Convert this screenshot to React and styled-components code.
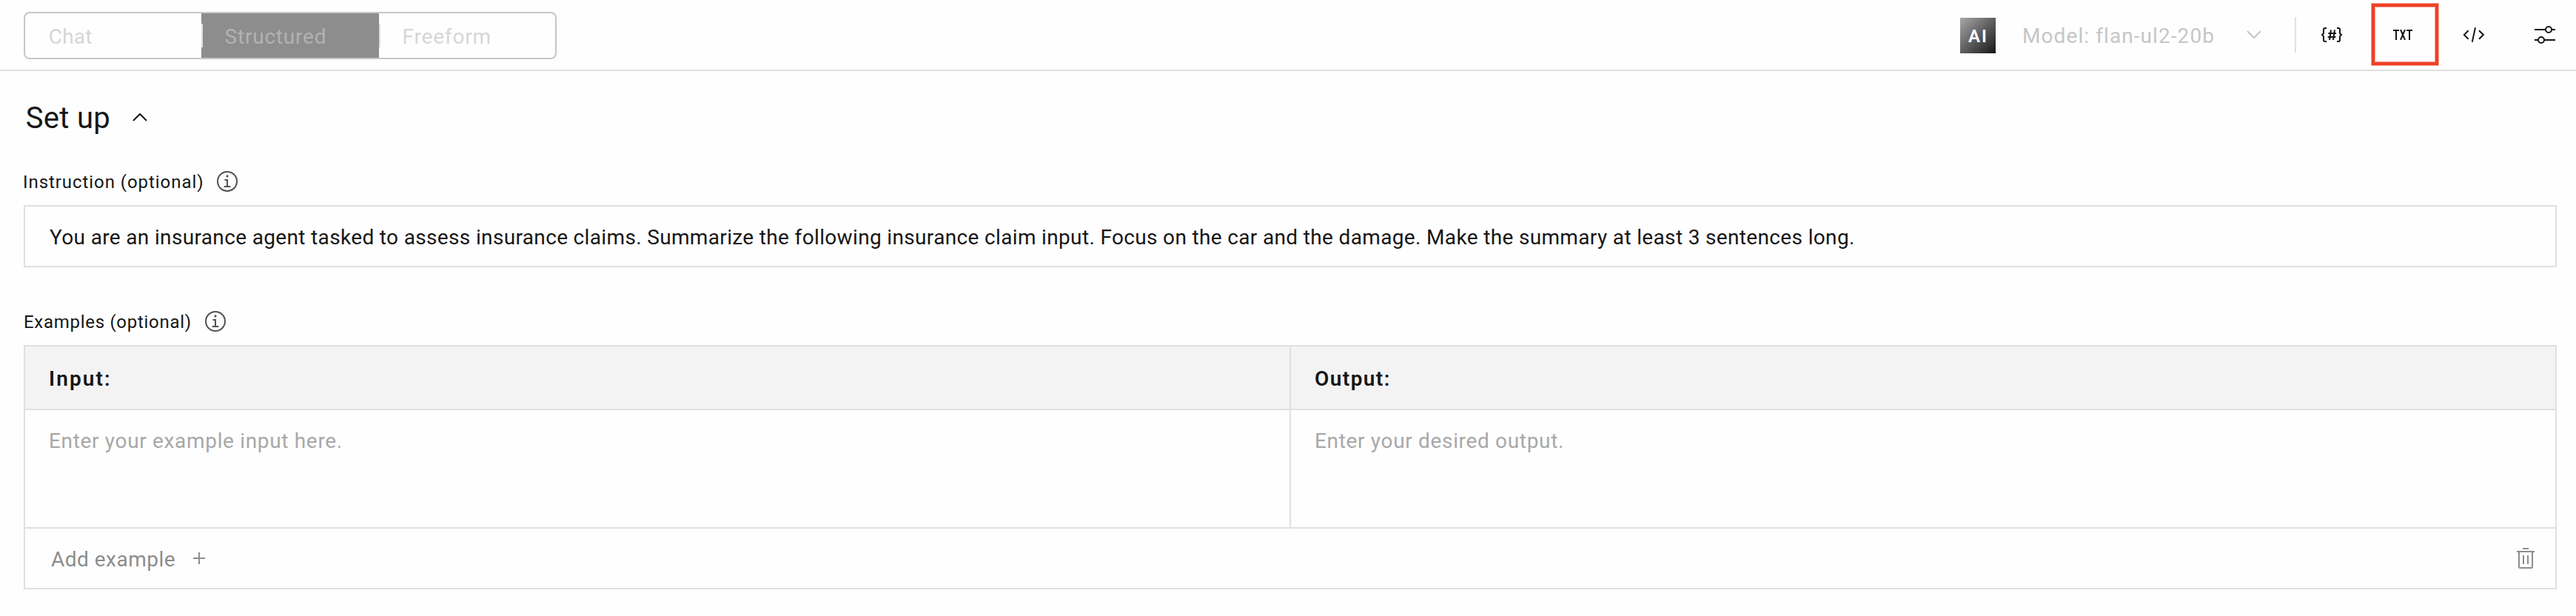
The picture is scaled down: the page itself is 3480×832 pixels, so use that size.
import React from "react";
import styled, { createGlobalStyle } from "styled-components";

const Global = createGlobalStyle`
  * { box-sizing: border-box; }
  body { margin: 0; background: #fff; color: #161616; font-family: Roboto, "Liberation Sans", sans-serif; }
`;

const Page = styled.main`
  width: 3480px;
  height: 832px;
  background: #fefefe;
`;

const Toolbar = styled.header`
  display: flex;
  justify-content: space-between;
  height: 96px;
  border-bottom: 2px solid #e0e0e0;
`;

const Text = styled.span`
  display: block;
  flex: none;
  padding-top: ${(p) => p.$drop || 0}px;
  font-size: ${(p) => p.$size || 28}px;
  line-height: ${(p) => p.$lh || 36}px;
  letter-spacing: ${(p) => p.$ls || 0}px;
  font-weight: ${(p) => p.$weight || 400};
  color: ${(p) => p.$color || "#161616"};
  white-space: nowrap;
`;

const Switcher = styled.div`
  display: flex;
  width: 720px;
  height: 64px;
  margin: 16px 0 0 32px;
  border: 2px solid #c6c6c6;
  border-radius: 8px;
`;

const Segment = styled.div`
  display: flex;
  align-items: center;
  gap: 29.5px;
  flex: 0 0 ${(p) => p.$w}px;
  padding-left: ${(p) => p.$pad || 0}px;
  background: ${(p) => (p.$active ? "#8d8d8d" : "transparent")};
`;

const SegmentRule = styled.i`
  width: 2px;
  height: 32px;
  background: #e0e0e0;
`;

const Tools = styled.div`
  display: flex;
  align-items: center;
  height: 94px;
`;

const AiBadge = styled.div`
  display: flex;
  align-items: center;
  width: 48px;
  height: 48px;
  margin: 2px 36px 0 0;
  padding-left: 11px;
  background: linear-gradient(135deg, #a8a8a8, #161616);
`;

const ModelSelect = styled.div`
  display: flex;
  align-items: center;
  gap: 43px;
  width: 368px;
`;

const Separator = styled.i`
  width: 2px;
  height: 48px;
  background: #e0e0e0;
`;

const Tool = styled.div`
  position: relative;
  display: flex;
  align-items: center;
  justify-content: center;
  width: ${(p) => p.$w || 96}px;
  height: 94px;
  padding-left: ${(p) => p.$pad || 0}px;
`;

const Highlight = styled.div`
  position: absolute;
  left: 6px;
  top: 5px;
  width: 90px;
  height: 83px;
  border: 4px solid #ee4127;
  box-shadow: 0 0 0 1px rgba(238, 65, 39, 0.5), inset 0 0 0 1px rgba(238, 65, 39, 0.5);
`;

const Content = styled.section`
  padding: 37px 26px 0 32px;
`;

const Heading = styled.h1`
  display: flex;
  align-items: center;
  gap: 30px;
  height: 52px;
  margin: 0;
  padding-left: 2.7px;
  font-weight: 400;
  svg { margin-bottom: 2px; }
`;

const Label = styled.div`
  display: flex;
  align-items: center;
  gap: 18px;
  height: 36px;
  margin-top: ${(p) => p.$top}px;
  margin-left: ${(p) => p.$shift || 0}px;
`;

const Field = styled.div`
  display: flex;
  align-items: center;
  height: 84px;
  margin-top: 14px;
  padding-left: 33px;
  border: 2px solid #e0e0e0;
`;

const Table = styled.div`
  display: grid;
  grid-template-columns: 1710px 1fr;
  grid-template-rows: 86px 160px 80px;
  margin-top: 14px;
  border: 2px solid #e0e0e0;
`;

const Cell = styled.div`
  padding: ${(p) => (p.$head ? 26 : 24)}px 0 0 32px;
  background: ${(p) => (p.$head ? "#f3f3f3" : "transparent")};
  border-bottom: 2px solid #e0e0e0;
  border-right: ${(p) => (p.$divided ? "2px solid #e0e0e0" : "0")};
`;

const Footer = styled.div`
  grid-column: 1 / -1;
  display: flex;
  justify-content: space-between;
  align-items: center;
  padding: 0 28px 0 35px;
`;

const AddExample = styled.div`
  display: flex;
  align-items: center;
  gap: 24px;
`;

const Chevron = ({ up, color }) => (
  <svg width="20" height="12" viewBox="0 0 20 12" fill="none" stroke={color} strokeWidth="2">
    <path d={up ? "M1 11 10 2l9 9" : "M1 1l9 9 9-9"} />
  </svg>
);

const Info = () => (
  <svg width="28" height="28" viewBox="0 0 28 28" fill="none" stroke="#525252" strokeWidth="2">
    <circle cx="14" cy="14" r="13" />
    <path d="M10.5 12H14v9M9.7 21h8.6" />
    <circle cx="14" cy="6.9" r="1.6" fill="#525252" stroke="none" />
  </svg>
);

const BracesIcon = () => (
  <svg width="28" height="20" viewBox="0 0 28 20" fill="none" stroke="#161616" strokeWidth="2">
    <path d="M7 1H5a2 2 0 0 0-2 2v5L1 10l2 2v5a2 2 0 0 0 2 2h2M21 1h2a2 2 0 0 1 2 2v5l2 2-2 2v5a2 2 0 0 1-2 2h-2M13 3.3 11 17M18 3.3 16 17M9.3 8H20M8.7 13h10.7" />
  </svg>
);

const TxtIcon = () => (
  <svg width="26" height="14" viewBox="0 0 26 14" fill="none" stroke="#161616" strokeWidth="2">
    <path d="M0 1h8M4 1v13M18 1h8M22 1v13M10 0l6 14M16 0l-6 14" />
  </svg>
);

const CodeIcon = () => (
  <svg width="30" height="20" viewBox="0 0 30 20" fill="none" stroke="#161616" strokeWidth="2">
    <path d="M7.6 4.2 1.8 10l5.8 5.8M22 4.2l5.8 5.8-5.8 5.8M17 .2l-4.3 19.6" />
  </svg>
);

const SlidersIcon = () => (
  <svg width="28" height="24" viewBox="0 0 28 24" fill="none" stroke="#161616" strokeWidth="2">
    <path d="M0 5h15M23 5h5M0 19h5M13 19h15" />
    <circle cx="19" cy="5" r="4" />
    <circle cx="9" cy="19" r="4" />
  </svg>
);

const PlusIcon = () => (
  <svg width="16" height="16" viewBox="0 0 16 16" stroke="#8d8d8d" strokeWidth="2">
    <path d="M8 0v16M0 8h16" />
  </svg>
);

const TrashIcon = () => (
  <svg width="24" height="28" viewBox="0 0 24 28" fill="none" stroke="#8d8d8d" strokeWidth="2">
    <path d="M8 1h8M0 5h24M3 5v21a1 1 0 0 0 1 1h16a1 1 0 0 0 1-1V5M9 10v12M15 10v12" />
  </svg>
);

export default function App() {
  return (
    <Page>
      <Global />
      <Toolbar>
        <Switcher>
          <Segment $w={238} $pad={31.7}><Text $drop={4} $ls={0.24} $color="#d6d6d6">Chat</Text></Segment>
          <Segment $w={240} $active>
            <SegmentRule />
            <Text $drop={4} $ls={0.8} $color="#b2b2b2">Structured</Text>
          </Segment>
          <Segment $w={238}>
            <SegmentRule />
            <Text $drop={4} $ls={0.82} $color="#d6d6d6">Freeform</Text>
          </Segment>
        </Switcher>
        <Tools>
          <AiBadge><Text $drop={2} $ls={2} $weight={600} $size={24} $color="#fff">AI</Text></AiBadge>
          <ModelSelect>
            <Text $drop={4} $ls={1.083} $color="#c6c6c6">Model: flan-ul2-20b</Text>
            <Chevron color="#c6c6c6" />
          </ModelSelect>
          <Separator />
          <Tool><BracesIcon /></Tool>
          <Tool><TxtIcon /><Highlight /></Tool>
          <Tool><CodeIcon /></Tool>
          <Tool $w={90} $pad={6}><SlidersIcon /></Tool>
        </Tools>
      </Toolbar>
      <Content>
        <Heading><Text $drop={2} $ls={0.316} $size={40} $lh={52}>Set up</Text><Chevron up color="#161616" /></Heading>
        <Label $top={42} $shift={-1}><Text $drop={2} $ls={0.94} $size={24}>Instruction (optional)</Text><Info /></Label>
        <Field>
          <Text $drop={4} $ls={0.345}>You are an insurance agent tasked to assess insurance claims. Summarize the following insurance claim input. Focus on the car and the damage. Make the summary at least 3 sentences long.</Text>
        </Field>
        <Label $top={55}><Text $drop={2} $ls={0.71} $size={24}>Examples (optional)</Text><Info /></Label>
        <Table>
          <Cell $head $divided><Text $ls={2.1} $weight={600}>Input:</Text></Cell>
          <Cell $head><Text $ls={1.43} $weight={600}>Output:</Text></Cell>
          <Cell $divided><Text $ls={0.668} $color="#a8a8a8">Enter your example input here.</Text></Cell>
          <Cell><Text $ls={0.668} $color="#a8a8a8">Enter your desired output.</Text></Cell>
          <Footer>
            <AddExample><Text $drop={4} $ls={0.495} $color="#8d8d8d">Add example</Text><PlusIcon /></AddExample>
            <TrashIcon />
          </Footer>
        </Table>
      </Content>
    </Page>
  );
}
